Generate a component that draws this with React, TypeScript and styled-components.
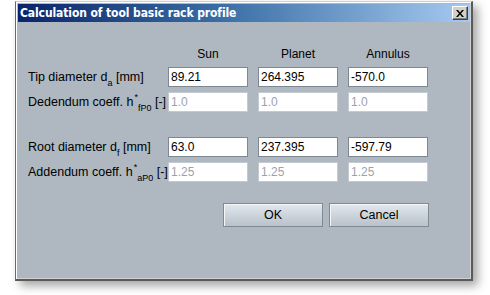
import React from "react";
import styled, { createGlobalStyle } from "styled-components";

const Global = createGlobalStyle`
  html, body { margin: 0; padding: 0; background: #ffffff; }
  body { font-family: "Liberation Sans", Arial, sans-serif; }
`;

const Page = styled.div`
  width: 490px;
  height: 295px;
  padding: 1px 0 0 15px;
  box-sizing: border-box;
`;

const Window = styled.div`
  width: 458px;
  height: 280px;
  box-sizing: border-box;
  background: #afb8c1;
  border-top: 1px solid #d4d0c8;
  border-left: 1px solid #6a6a6a;
  border-right: 2px solid #5a5a5a;
  border-bottom: 2px solid #5a5a5a;
  box-shadow: 5px 5px 9px rgba(0, 0, 0, 0.35), inset 1px 1px 0 #ffffff, inset -1px -1px 0 #d0d0d0;
  padding: 1px;
  display: flex;
  flex-direction: column;
`;

const TitleBar = styled.div`
  height: 18px;
  margin: 1px 0 0 1px;
  background: linear-gradient(to right, #0a246a 0%, #3a6ea5 45%, #a6caf0 100%);
  display: flex;
  align-items: center;
  justify-content: space-between;
  padding: 0 2px;
`;

const Title = styled.span`
  color: #ffffff;
  font-family: "DejaVu Sans Condensed", "DejaVu Sans", sans-serif;
  font-weight: bold;
  font-size: 12px;
  letter-spacing: -0.1px;
`;

const CloseButton = styled.div`
  width: 16px;
  height: 14px;
  box-sizing: border-box;
  background: #d4d0c8;
  border-top: 1px solid #ffffff;
  border-left: 1px solid #ffffff;
  border-right: 1px solid #404040;
  border-bottom: 1px solid #404040;
  box-shadow: inset -1px -1px 0 #808080;
  display: flex;
  align-items: center;
  justify-content: center;
`;

const Body = styled.div`
  padding: 24px 0 0 11px;
`;

const Grid = styled.div`
  display: grid;
  grid-template-columns: 130px 80px 80px 80px;
  column-gap: 10px;
  row-gap: 5px;
  grid-template-rows: 16px 20px 20px 15px 20px 20px;
`;

const Header = styled.div`
  font-size: 12px;
  color: #000;
  text-align: center;
  line-height: 16px;
`;

const Label = styled.div`
  font-size: 12.5px;
  color: #000;
  white-space: nowrap;
  line-height: 20px;
  sub, sup { font-size: 9px; line-height: 0; position: relative; vertical-align: baseline; }
  sub { top: 5px; }
  sup { top: -6px; margin-left: 1px; }
`;

const Field = styled.input<{ $disabled?: boolean }>`
  width: 80px;
  height: 20px;
  box-sizing: border-box;
  margin: 0;
  padding: 0 2px;
  font-family: "Liberation Sans", Arial, sans-serif;
  font-size: 12px;
  background: #ffffff;
  color: ${(p) => (p.$disabled ? "#9aa3ad" : "#000000")};
  border: 1px solid ${(p) => (p.$disabled ? "#c3cad1" : "#7d8893")};
  outline: none;
`;

const Spacer = styled.div`
  grid-column: 1 / span 4;
`;

const Buttons = styled.div`
  display: flex;
  gap: 6px;
  margin: 21px 0 0 195px;
`;

const Button = styled.button`
  width: 100px;
  height: 24px;
  box-sizing: border-box;
  font-family: "Liberation Sans", Arial, sans-serif;
  font-size: 12.5px;
  color: #000;
  background: linear-gradient(to bottom, #e2e8ee 0%, #ccd4dc 50%, #b9c2cb 100%);
  border: 1px solid #7f8a95;
  box-shadow: inset 1px 1px 0 #f4f6f8;
  padding: 0;
`;

type Row = { label: React.ReactNode; values: string[]; disabled?: boolean };

const rows1: Row[] = [
  { label: <>Tip diameter d<sub>a</sub> [mm]</>, values: ["89.21", "264.395", "-570.0"] },
  { label: <>Dedendum coeff. h<sup>*</sup><sub>fP0</sub> [-]</>, values: ["1.0", "1.0", "1.0"], disabled: true },
];
const rows2: Row[] = [
  { label: <>Root diameter d<sub>f</sub> [mm]</>, values: ["63.0", "237.395", "-597.79"] },
  { label: <>Addendum coeff. h<sup>*</sup><sub>aP0</sub> [-]</>, values: ["1.25", "1.25", "1.25"], disabled: true },
];

const renderRow = (r: Row, i: number) => (
  <React.Fragment key={i}>
    <Label>{r.label}</Label>
    {r.values.map((v, j) => (
      <Field key={j} defaultValue={v} readOnly $disabled={r.disabled} />
    ))}
  </React.Fragment>
);

export default function App() {
  return (
    <>
      <Global />
      <Page>
        <Window>
          <TitleBar>
            <Title>Calculation of tool basic rack profile</Title>
            <CloseButton>
              <svg width="8" height="7" viewBox="0 0 8 7">
                <path d="M0 0h2l2 2.5L6 0h2L5 3.5 8 7H6L4 4.5 2 7H0l3-3.5z" fill="#000" />
              </svg>
            </CloseButton>
          </TitleBar>
          <Body>
            <Grid>
              <div />
              <Header>Sun</Header>
              <Header>Planet</Header>
              <Header>Annulus</Header>
              {rows1.map(renderRow)}
              <Spacer />
              {rows2.map((r, i) => renderRow(r, i + 10))}
            </Grid>
            <Buttons>
              <Button>OK</Button>
              <Button>Cancel</Button>
            </Buttons>
          </Body>
        </Window>
      </Page>
    </>
  );
}
